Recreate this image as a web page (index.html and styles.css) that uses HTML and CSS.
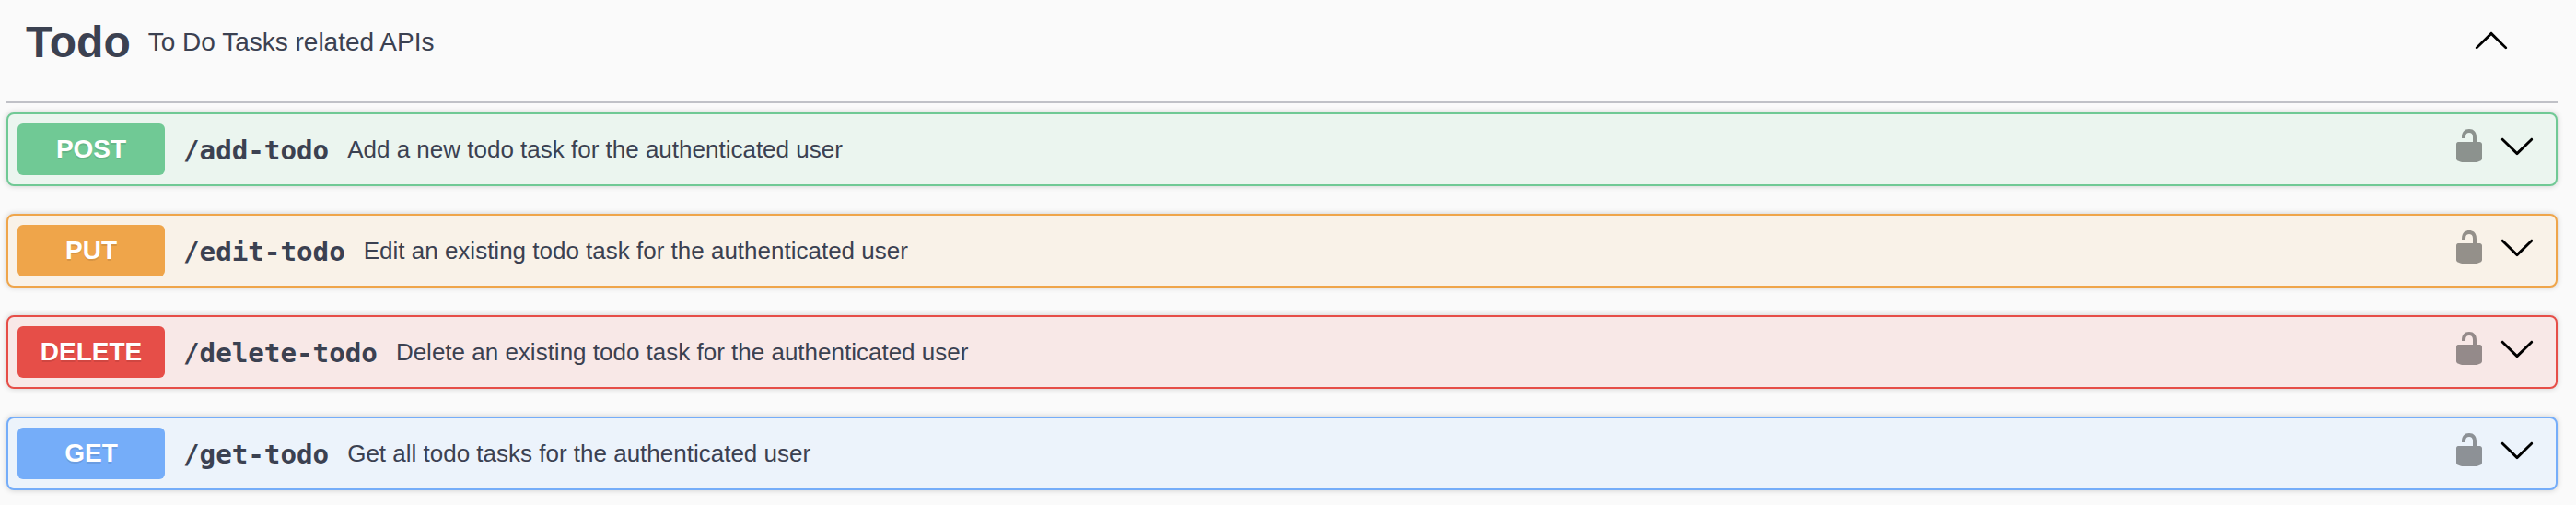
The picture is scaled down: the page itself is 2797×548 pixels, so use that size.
FILE: index.html
```html
<!DOCTYPE html>
<html lang="en">
<head>
<meta charset="utf-8">
<title>Todo API</title>
<link rel="stylesheet" href="styles.css">
</head>
<body>
<svg class="symbols" aria-hidden="true">
  <symbol id="unlocked" viewBox="0 0 20 20"><path d="M15.8 8H14V5.6C14 2.703 12.665 1 10 1 7.334 1 6 2.703 6 5.6V6h2v-.801C8 3.754 8.797 3 10 3c1.203 0 2 .754 2 2.199V8H4c-.553 0-1 .646-1 1.199V17c0 .549.428 1.139.951 1.307l1.197.387C5.672 18.861 6.55 19 7.1 19h5.8c.549 0 1.428-.139 1.951-.307l1.196-.387c.524-.167.953-.757.953-1.306V9.199C17 8.646 16.352 8 15.8 8z"/></symbol>
  <symbol id="arrow-down" viewBox="0 0 20 20"><path d="M17.418 6.109c.272-.268.709-.268.979 0s.271.701 0 .969l-7.908 7.83c-.27.268-.707.268-.979 0l-7.908-7.83c-.27-.268-.27-.701 0-.969.271-.268.709-.268.979 0L10 13.25z"/></symbol>
  <symbol id="arrow-up" viewBox="0 0 20 20"><path d="M17.418 14.908c.272.268.709.268.979 0s.271-.701 0-.969l-7.908-7.83c-.27-.268-.707-.268-.979 0l-7.908 7.83c-.27.268-.27.701 0 .969.271.268.709.268.979 0L10 7.767z"/></symbol>
</svg>
<main class="tag-section">
  <header class="tag">
    <h3 class="tag-name">Todo</h3>
    <p class="tag-description">To Do Tasks related APIs</p>
    <svg class="icon"><use href="#arrow-up"/></svg>
  </header>
  <div class="operations">
    <div class="operation post">
      <span class="method">POST</span>
      <span class="path">/add-todo</span>
      <span class="description">Add a new todo task for the authenticated user</span>
      <svg class="icon lock"><use href="#unlocked"/></svg>
      <svg class="icon"><use href="#arrow-down"/></svg>
    </div>
    <div class="operation put">
      <span class="method">PUT</span>
      <span class="path">/edit-todo</span>
      <span class="description">Edit an existing todo task for the authenticated user</span>
      <svg class="icon lock"><use href="#unlocked"/></svg>
      <svg class="icon"><use href="#arrow-down"/></svg>
    </div>
    <div class="operation delete">
      <span class="method">DELETE</span>
      <span class="path">/delete-todo</span>
      <span class="description">Delete an existing todo task for the authenticated user</span>
      <svg class="icon lock"><use href="#unlocked"/></svg>
      <svg class="icon"><use href="#arrow-down"/></svg>
    </div>
    <div class="operation get">
      <span class="method">GET</span>
      <span class="path">/get-todo</span>
      <span class="description">Get all todo tasks for the authenticated user</span>
      <svg class="icon lock"><use href="#unlocked"/></svg>
      <svg class="icon"><use href="#arrow-down"/></svg>
    </div>
  </div>
</main>
</body>
</html>
```
FILE: styles.css
```css
* { box-sizing: border-box; }
body {
  margin: 0;
  background: #fafafa;
  color: #3b4151;
  font-family: "Liberation Sans", Arial, sans-serif;
}
.symbols { display: none; }
.tag-section { padding: 0 20px 16px 7px; }
.tag {
  display: flex;
  align-items: flex-start;
  height: 112px;
  padding: 0 52px 0 21px;
  border-bottom: 2px solid #c0c1c7;
}
.tag-name {
  margin: 0;
  padding-top: 18px;
  font-size: 48px;
  line-height: 56px;
  font-weight: 700;
}
.tag-description {
  flex: 1;
  margin: 0;
  padding: 30px 0 0 19px;
  font-size: 28px;
  line-height: 32px;
}
.icon { width: 40px; height: 40px; flex: none; fill: #000; }
.tag .icon { margin-top: 23px; }
.operations {
  display: flex;
  flex-direction: column;
  gap: 30px;
  padding-top: 10px;
}
.operation {
  display: flex;
  align-items: center;
  height: 80px;
  padding: 0 22px 0 10px;
  border: 2px solid;
  border-radius: 8px;
  box-shadow: 0 0 6px rgba(0, 0, 0, .19);
}
.operation .icon { margin-bottom: 8px; }
.operation .lock { margin-right: 12px; opacity: .4; }
.method {
  width: 160px;
  height: 56px;
  border-radius: 6px;
  color: #fff;
  font-size: 28px;
  font-weight: 700;
  line-height: 55px;
  text-align: center;
  text-shadow: 0 2px 0 rgba(0, 0, 0, .1);
}
.path {
  padding: 2px 0 0 20px;
  font-family: "DejaVu Sans Mono", monospace;
  font-size: 29.2px;
  font-weight: 700;
  white-space: nowrap;
}
.description { flex: 1; padding-left: 20px; font-size: 26px; }
.post { border-color: #70c995; background: #ebf5ef; }
.post .method { background: #70c995; }
.put { border-color: #efa54a; background: #f9f2e8; }
.put .method { background: #efa54a; }
.delete { border-color: #e64e48; background: #f8e8e7; }
.delete .method { background: #e64e48; }
.get { border-color: #75adf9; background: #ecf3fb; }
.get .method { background: #75adf9; }
```
